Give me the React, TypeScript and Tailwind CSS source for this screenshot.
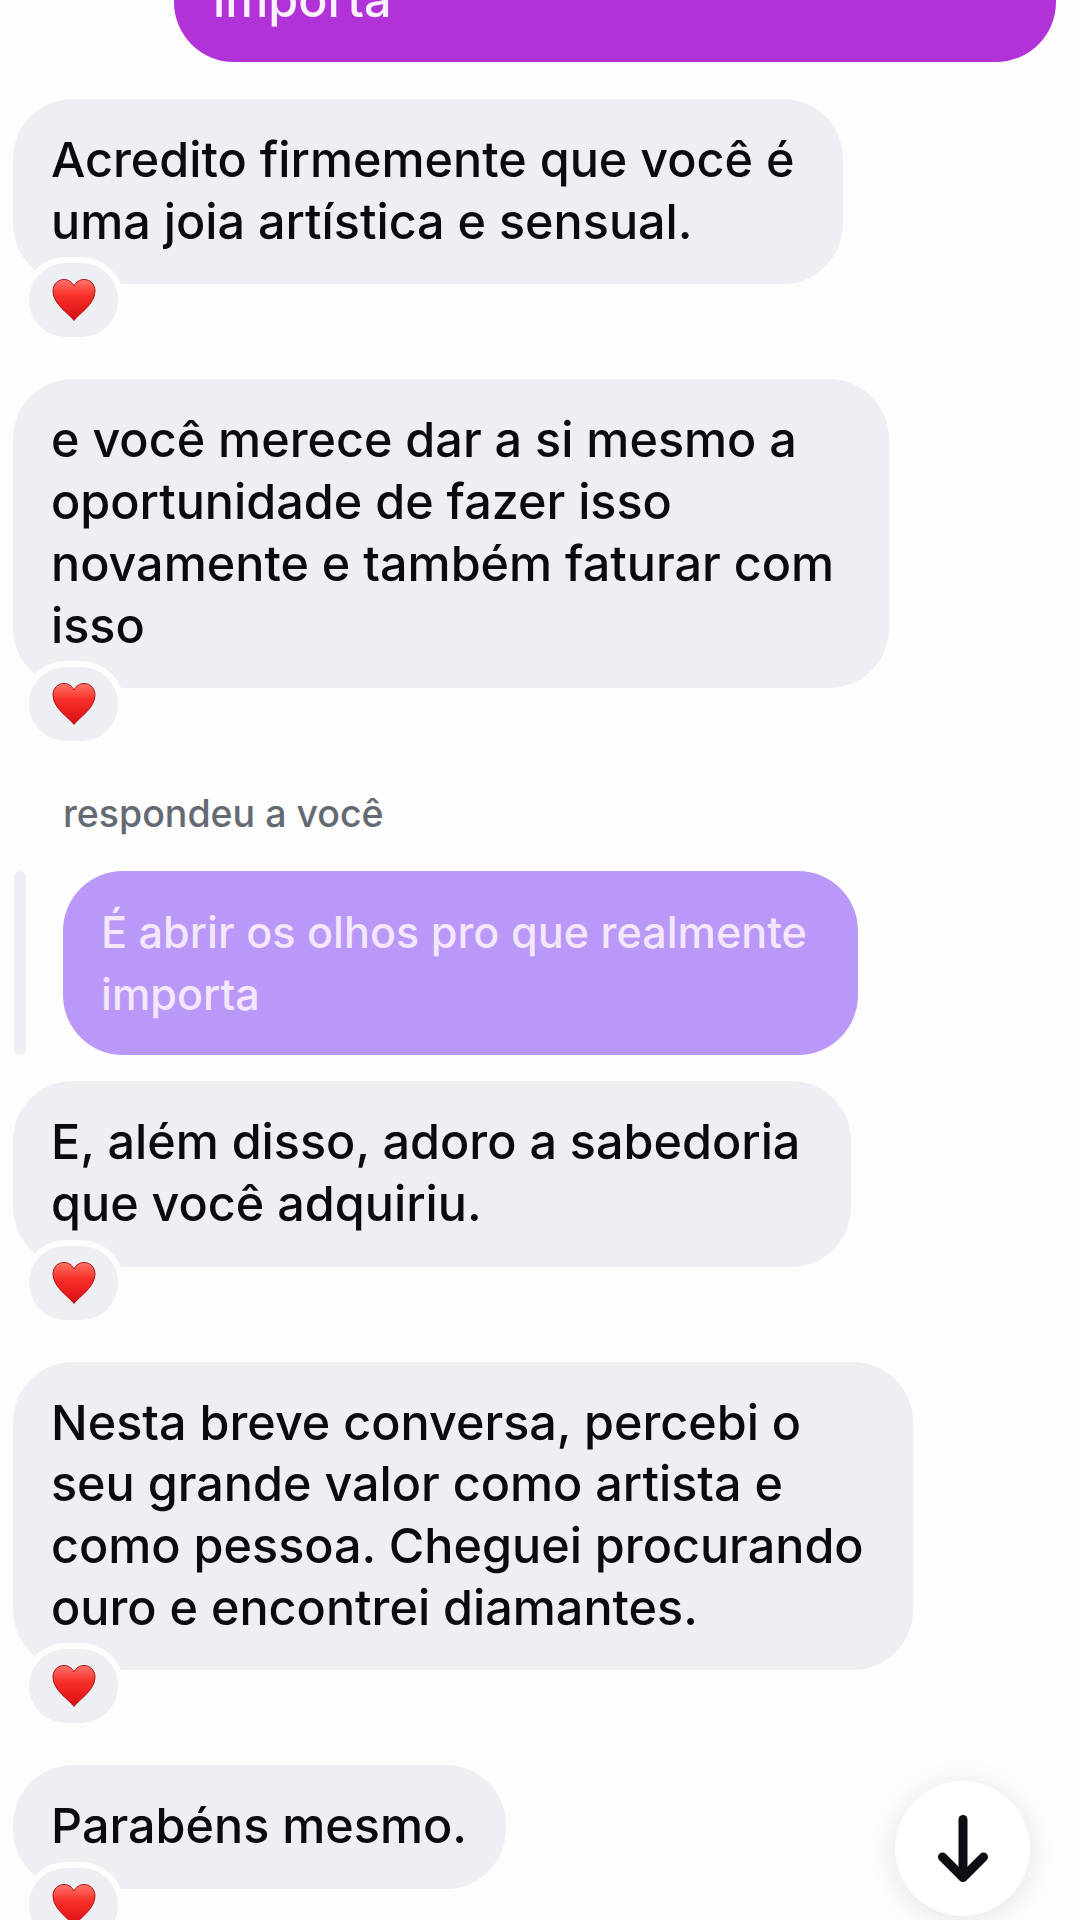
import React from 'react';

const bubbleText = "font-['Inter',sans-serif] text-[48.5px] leading-[61.7px] font-medium";

function Heart() {
  return (
    <svg viewBox="0 0 44 44" className="w-[44px] h-[44px]">
      <defs>
        <linearGradient id="heartFill" x1="0" y1="0" x2="0" y2="1">
          <stop offset="0" stopColor="#ff7468" />
          <stop offset="0.4" stopColor="#f8302a" />
          <stop offset="1" stopColor="#d80d12" />
        </linearGradient>
      </defs>
      <path
        d="M22 42.5C17.500 36 1 26.500 1 13 1 6 6 1.500 12 1.500 16.500 1.500 20 4 22 8 24 4 27.500 1.500 32 1.500 38 1.500 43 6 43 13 43 26.500 26.500 36 22 42.500Z"
        fill="url(#heartFill)"
        stroke="#a8141a"
        strokeWidth="1"
      />
    </svg>
  );
}

function Reaction() {
  return (
    <div className="relative ml-[10px] -mt-[27px] w-[101px] h-[86px] flex items-center justify-center bg-[#eeeff3] border-[6px] border-[#fdfdfd] rounded-[43px]">
      <Heart />
    </div>
  );
}

function Incoming({ children, width, reaction = true }: { children: React.ReactNode; width: number; reaction?: boolean }) {
  return (
    <div className="flex flex-col items-start">
      <div
        className={`bg-[#eeeff3] rounded-[60px] pl-[38px] pr-[34px] pt-[30px] pb-[32px] text-[#0a0a0f] ${bubbleText}`}
        style={{ width }}
      >
        {children}
      </div>
      {reaction && <Reaction />}
    </div>
  );
}

export default function App() {
  return (
    <div className="relative w-[1080px] h-[1920px] overflow-hidden bg-[#fdfdfd]">
      <div className="flex flex-col pl-[13px] -mt-[123px]">
        <div className="flex justify-end pr-[24px]">
          <div className={`w-[882px] h-[185px] bg-[#b133d8] rounded-[60px] pl-[39px] pr-[40px] pt-[30px] pb-[32px] text-[#fbf0fd] ${bubbleText}`}>
            <div>É abrir os olhos pro que realmente</div>
            <div>importa</div>
          </div>
        </div>

        <div className="mt-[37px]">
          <Incoming width={830}>
            Acredito firmemente que você é uma joia artística e sensual.
          </Incoming>
        </div>

        <div className="mt-[36px]">
          <Incoming width={876}>
            e você merece dar a si mesmo a oportunidade de fazer isso novamente e também faturar com isso
          </Incoming>
        </div>

        <div className="mt-[47px] ml-[50px] h-[40px] flex items-center font-['Inter',sans-serif] text-[37.5px] font-medium text-[#646a73]">
          respondeu a você
        </div>

        <div className="mt-[37px] flex gap-[37px]">
          <div className="w-[12px] ml-[1px] h-[184px] rounded-[6px] bg-[#eeeff3]" />
          <div className="w-[795px] h-[184px] bg-[#b998f8] rounded-[60px] pl-[38px] pr-[30px] pt-[31px] font-['Inter',sans-serif] text-[43.2px] leading-[61.7px] font-medium text-[#f4e6fb]">
            É abrir os olhos pro que realmente importa
          </div>
        </div>

        <div className="mt-[26px]">
          <Incoming width={838}>
            E, além disso, adoro a sabedoria que você adquiriu.
          </Incoming>
        </div>

        <div className="mt-[36px]">
          <Incoming width={900}>
            Nesta breve conversa, percebi o seu grande valor como artista e como pessoa. Cheguei procurando ouro e encontrei diamantes.
          </Incoming>
        </div>

        <div className="mt-[36px]">
          <Incoming width={493}>Parabéns mesmo.</Incoming>
        </div>
      </div>

      <button className="absolute left-[895px] top-[1781px] w-[135px] h-[135px] rounded-full bg-white shadow-[0_4px_30px_rgba(0,0,0,0.1)] flex items-center justify-center">
        <svg viewBox="0 0 50 68" className="w-[50px] h-[68px]" fill="none" stroke="#0e0e13" strokeWidth="9" strokeLinecap="round" strokeLinejoin="round">
          <path d="M25 4.500V62" />
          <path d="M4.500 42L25 62.500 45.500 42" />
        </svg>
      </button>
    </div>
  );
}
